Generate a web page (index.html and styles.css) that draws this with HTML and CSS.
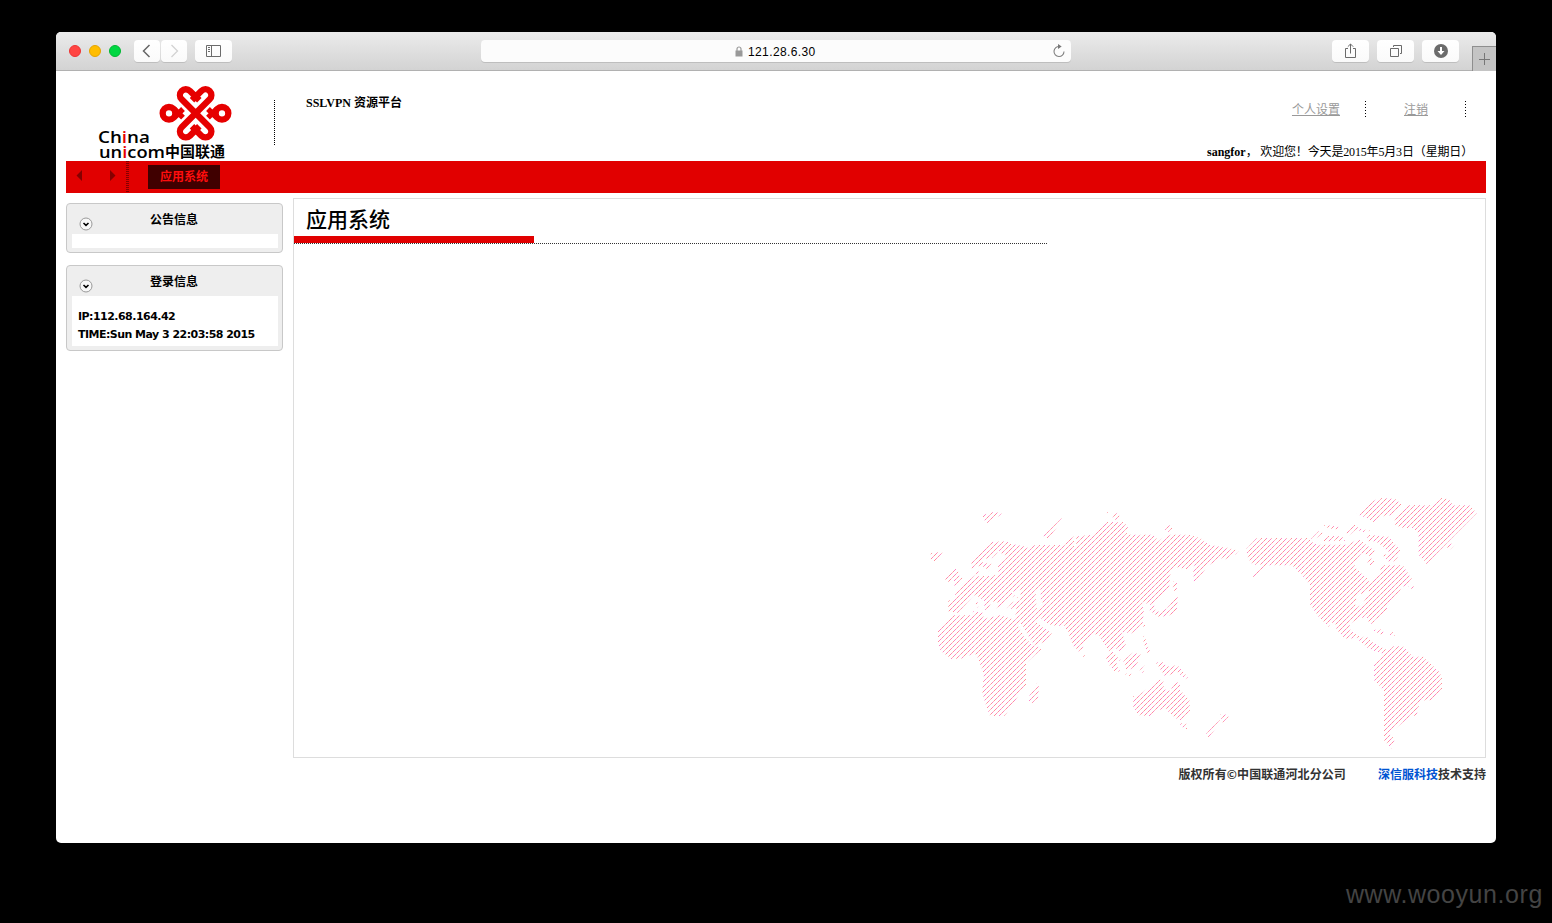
FILE: index.html
```html
<!DOCTYPE html>
<html lang="zh-CN">
<head>
<meta charset="utf-8">
<title>SSLVPN 资源平台</title>
<link rel="stylesheet" href="styles.css">
</head>
<body>
<div class="window">
  <div class="toolbar">
    <div class="lights"><i class="light red"></i><i class="light amber"></i><i class="light green"></i></div>
    <div class="history">
      <span class="btn small"><svg width="26" height="22" viewBox="0 0 26 22"><path d="M15.500 5 9.500 11l6 6" fill="none" stroke="#666" stroke-width="1.500"/></svg></span>
      <span class="btn small"><svg width="26" height="22" viewBox="0 0 26 22"><path d="M10.500 5 16.500 11l-6 6" fill="none" stroke="#d2d2d2" stroke-width="1.300"/></svg></span>
    </div>
    <span class="btn sidebar-btn"><svg width="37" height="22" viewBox="0 0 37 22"><path d="M11.500 5.500h14v11h-14zM16.500 5.500v11M13 7.500h2M13 9.500h2M13 11.500h2" fill="none" stroke="#6b6b6b"/></svg></span>
    <div class="address">
      <span class="host"><svg width="8" height="11" viewBox="0 0 8 11"><path d="M2 5V3a2 2 0 0 1 4 0v2" fill="none" stroke="#999" stroke-width="1.200"/><path d="M.5 4.500h7v6h-7z" fill="#999"/></svg>121.28.6.30</span>
      <svg class="reload" width="13" height="14" viewBox="0 0 13 14"><path d="M7.500 2.500A5 5 0 1 0 12 7.500" fill="none" stroke="#808080" stroke-width="1.100"/><path d="M6 0v5l3.700-2.500z" fill="#777"/></svg>
    </div>
    <div class="actions">
      <span class="btn"><svg width="37" height="22" viewBox="0 0 37 22"><path d="M16 8.500h-2.500v9h10v-9H21M18.500 13.500V4M15.800 6.700l2.700-2.700 2.700 2.700" fill="none" stroke="#6b6b6b"/></svg></span>
      <span class="btn"><svg width="37" height="22" viewBox="0 0 37 22"><path d="M13.500 8.500h8v8h-8zM16.500 7V5.500h8v8H23" fill="none" stroke="#6b6b6b"/></svg></span>
      <span class="btn"><svg width="37" height="22" viewBox="0 0 37 22"><circle cx="19" cy="11" r="7" fill="#6b6b6b"/><path d="M18 7h2v4h2.500L19 15l-3.500-4H18z" fill="#fff"/></svg></span>
    </div>
    <span class="new-tab"><svg width="23" height="24" viewBox="0 0 23 24"><path d="M11.500 6v12M6 12.500h11" stroke="#777" fill="none"/></svg></span>
  </div>

  <div class="page">
    <header class="header">
      <svg class="logo" width="208" height="90" viewBox="0 0 208 90">
        <g transform="translate(89 12) scale(.3333)" fill="none" stroke="#e60000" stroke-width="19">
          <path d="M122 91 80 49A17.500 17.500 0 0 1 105 24L133 52M122 91l42-42A17.500 17.500 0 0 0 139 24L111 52"/>
          <path d="M122 91 80 133A17.500 17.500 0 0 0 105 158L133 130M122 91l42 42A17.500 17.500 0 0 1 139 158L111 130"/>
          <circle cx="42" cy="91" r="19"/><circle cx="201" cy="91" r="19"/>
          <path d="M58 78 84 104M58 104 84 78M185 78 159 104M185 104 159 78" stroke-width="16"/>
        </g>
        <g class="logo-text">
          <text x="32" y="72" textLength="52" lengthAdjust="spacingAndGlyphs">Ch<tspan class="hot">i</tspan>na</text>
          <text x="33" y="87" textLength="66" lengthAdjust="spacingAndGlyphs">un<tspan class="hot">i</tspan>com</text>
          <text class="logo-cn" x="99" y="86" textLength="60" lengthAdjust="spacingAndGlyphs">中国联通</text>
        </g>
      </svg>
      <div class="title">SSLVPN 资源平台</div>
      <div class="user">
        <div class="links"><a>个人设置</a><a>注销</a></div>
        <div class="welcome"><b>sangfor</b>，&nbsp;欢迎您！今天是2015年5月3日（星期日）</div>
      </div>
    </header>
    <nav class="nav">
      <svg class="arrows" width="63" height="32" viewBox="0 0 63 32"><path d="M16 9v11l-5.500-5.500zM44 9v11l5.500-5.500z" fill="#850000"/><path d="M61.500 0v32" stroke="#850000" stroke-width="3" stroke-dasharray="1 1"/></svg>
      <span class="tab">应用系统</span>
    </nav>
    <div class="body">
      <aside class="side">
        <section class="box"><h2><svg width="14" height="14" viewBox="0 0 14 14"><circle cx="7" cy="7" r="6" fill="#f8f8f8" stroke="#999"/><path d="m4.500 6 2.500 2.300L9.500 6" fill="none" stroke="#000" stroke-width="1.600"/></svg>公告信息</h2><div class="box-body empty"></div></section>
        <section class="box"><h2><svg width="14" height="14" viewBox="0 0 14 14"><circle cx="7" cy="7" r="6" fill="#f8f8f8" stroke="#999"/><path d="m4.500 6 2.500 2.300L9.500 6" fill="none" stroke="#000" stroke-width="1.600"/></svg>登录信息</h2><div class="box-body"><p>IP:112.68.164.42</p><p>TIME:Sun May 3 22:03:58 2015</p></div></section>
      </aside>
      <div class="main">
        <main class="panel">
          <h1>应用系统</h1>
          <div class="rule"></div>
          <svg class="map" width="560" height="260" viewBox="0 0 1680 780">
            <defs>
              <pattern id="hatch" width="45" height="15" patternUnits="userSpaceOnUse" shape-rendering="crispEdges">
                <path fill="#ff84c4" d="M12 0h3v3h-3zM3 9h3v3H3zM24 3h3v3h-3zM15 12h3v3h-3zM36 6h3v3h-3z"/>
                <path fill="#ff8f98" d="M9 3h3v3H9zM0 12h3v3H0zM21 6h3v3h-3zM42 0h3v3h-3zM33 9h3v3h-3z"/>
                <path fill="#ffb4bc" d="M6 6h3v3H6zM27 0h3v3h-3zM18 9h3v3h-3zM39 3h3v3h-3zM30 12h3v3h-3z"/>
              </pattern>
            </defs>
            <g fill="url(#hatch)">
              <path d="M188 75 220 66 246 68 240 76 204 100 190 88zM370 138 392 116 426 84 428 90 384 146zM558 68 566 66 566 72zM576 80 592 68 600 80 588 90zM734 120 748 104 758 116 745 126zM32 190 54 186 68 188 44 214 32 208zM75 268 90 252 96 240 108 236 118 250 118 262 128 264 124 274 104 290 102 272 94 262 96 272 86 278z"/>
              <path d="M154 216 214 156 262 154 272 162 314 168 312 178 340 165 436 165 438 156 460 140 510 135 522 134 560 96 608 96 624 108 620 134 700 134 716 154 740 134 808 134 844 146 870 165 916 172 956 182 948 192 918 208 900 204 860 230 850 246 822 276 820 240 834 222 800 238 770 232 752 246 748 290 694 344 664 336 672 362 668 400 636 430 606 426 618 466 600 484 584 472 568 486 552 460 538 436 520 432 496 450 488 474 480 488 458 466 446 430 432 408 392 406 362 386 348 396 374 414 396 432 368 458 348 464 364 478 318 520 318 584 254 678 210 678 196 640 186 604 192 554 174 504 164 490 122 506 94 508 62 482 54 462 54 422 102 376 156 376 160 364 190 368 190 386 240 376 286 390 288 356 260 356 278 336 300 332 282 318 252 340 224 358 234 338 206 332 212 346 196 364 192 330 162 316 114 368 84 364 84 332 108 326 104 304 158 262 172 250 154 234z"/>
              <path d="M328 618 352 578 358 590 354 624 336 640 326 632zM760 274 772 280 770 300 758 304zM762 328 774 320 770 366 744 378 714 380 688 360 692 340 708 350 704 366 720 364 740 356zM556 500 576 484 602 510 588 516 600 544 586 546 568 526zM610 512 638 488 662 492 648 530 620 542zM670 400 678 410 668 410zM670 432 676 446 682 464 690 484 682 490 670 454zM658 540 676 526 670 550zM612 552 634 550 630 558zM708 518 728 514 740 530 772 526 804 562 796 568 772 546 736 560zM640 618 654 618 718 568 732 576 730 598 752 602 766 570 780 584 780 600 808 630 810 664 786 692 766 684 736 656 714 660 690 678 656 676 640 650zM778 700 798 698 802 718 790 714zM858 732 880 708 900 690 898 702 866 742zM900 674 914 672 926 680 908 698zM486 500 494 494 494 502z"/>
              <path d="M978 178 1010 144 1166 144 1172 154 1194 164 1286 164 1314 146 1364 182 1356 200 1326 188 1300 220 1310 238 1340 264 1354 280 1380 242 1384 226 1448 226 1476 268 1466 284 1446 290 1432 314 1400 350 1404 364 1380 380 1364 390 1360 404 1346 396 1340 380 1312 386 1290 402 1290 418 1302 430 1326 444 1346 430 1342 444 1370 464 1400 480 1392 492 1362 482 1340 472 1310 444 1276 446 1250 420 1248 404 1234 396 1226 410 1194 378 1170 342 1170 286 1152 262 1116 226 1040 226 1002 262 998 258 1032 224 998 224 984 204z"/>
              <path d="M1310 72 1334 54 1352 38 1376 24 1426 26 1446 44 1420 78 1398 74 1360 96 1340 84zM1422 104 1426 80 1466 45 1534 46 1564 24 1586 28 1602 46 1650 46 1670 70 1582 158 1520 222 1496 194 1496 130 1478 114 1448 114zM1576 170 1616 150 1592 178zM1342 134 1406 140 1440 180 1434 200 1424 214 1404 214 1388 196 1412 190 1368 154 1342 154zM1172 148 1196 124 1210 130 1186 146zM1210 104 1256 110 1250 118 1226 116zM1212 138 1266 138 1276 152 1212 154zM1278 128 1300 102 1322 116 1352 122 1330 126 1308 118 1288 136zM1340 214 1358 204 1364 218 1352 228zM1358 420 1384 418 1394 430 1384 434zM1408 434 1418 426 1426 438zM1464 290 1482 288 1478 298z"/>
              <path d="M1362 516 1422 468 1448 468 1480 500 1510 500 1560 548 1566 566 1566 596 1534 630 1500 632 1490 676 1468 680 1408 732 1424 748 1414 776 1392 750 1392 602 1362 570z"/>
            </g>
            <path fill="#fff" d="M156 238 190 222 188 208 216 204 232 188 234 178 246 192 264 200 234 224 236 252 216 258 178 258 168 250zM274 306 300 300 302 324 288 322zM348 304 356 290 364 302 360 326 368 332 366 354 350 356 348 332zM290 402 302 400 318 426 334 452 346 468 330 460 314 440zM348 394 358 380 374 394 394 410 378 416zM1310 314 1320 300 1324 316 1344 302 1354 310 1336 326 1328 342 1304 356zM462 140h6v32h-6z"/>
            <path fill="url(#hatch)" d="M188 228 200 218 216 222 206 244zM166 250 176 242 176 254zM246 216 258 212 254 226zM190 344 202 340 204 352zM166 340 176 336 174 354zM1308 300 1318 292 1318 302z"/>
          </svg>
        </main>
        <footer class="footer"><span class="copyright">版权所有©中国联通河北分公司</span><span><a>深信服科技</a>技术支持</span></footer>
      </div>
    </div>
  </div>
</div>
<div class="watermark">www.wooyun.org</div>
</body>
</html>
```

FILE: styles.css
```css
* { box-sizing: border-box; }
body { margin: 0; height: 923px; padding: 32px 56px 0; background: #000; overflow: hidden; color: #000; font: 12px/18px "Liberation Serif", "Noto Sans CJK SC", serif; }
svg { display: block; flex: none; }
.window { height: 811px; background: #fff; border-radius: 5px; overflow: hidden; }
.toolbar { height: 39px; display: flex; align-items: flex-start; padding: 8px 0 0 13px; background: linear-gradient(#ebebeb, #d3d3d3); border-bottom: 1px solid #b1b1b1; }
.lights { display: flex; gap: 8px; padding-top: 5px; }
.light { width: 12px; height: 12px; border-radius: 50%; }
.red { background: #ff4543; border: 1px solid #e33; }
.amber { background: #ffbd00; border: 1px solid #e5a400; }
.green { background: #00d742; border: 1px solid #00b732; }
.history { display: flex; gap: 1px; margin-left: 13px; }
.btn { width: 37px; height: 22px; border-radius: 4px; background: linear-gradient(#fff, #fafafa); box-shadow: 0 1px 0 #bebebe; }
.small { width: 26px; }
.sidebar-btn { margin-left: 8px; }
.address { width: 590px; height: 22px; margin-left: 249px; padding: 0 6px 0 254px; display: flex; justify-content: space-between; align-items: center; border-radius: 4px; background: #fcfcfc; box-shadow: 0 1px 0 #bebebe; font: 12px/22px "Liberation Sans", sans-serif; }
.host { display: flex; align-items: center; gap: 5px; letter-spacing: .38px; padding-top: 1px; }
.actions { display: flex; gap: 8px; margin-left: 261px; }
.new-tab { width: 24px; height: 25px; margin: 6px 0 0 13px; border: solid #8e8e8e; border-width: 1px 0 0 1px; background: #c4c4c4; }
.page { padding: 0 10px; }
.header { height: 90px; display: flex; }
.logo { overflow: visible; }
.logo-text { font: 600 17px "Open Sans", sans-serif; }
.hot { fill: #e60000; }
.logo-cn { font: 700 14.500px "Noto Sans CJK SC", sans-serif; }
.title { height: 45px; margin-top: 29px; padding: 0 0 0 32px; font-weight: 700; line-height: 6px; background: repeating-linear-gradient(#000 0 1px, transparent 1px 2px) left / 1px 100% no-repeat; }
.user { margin-left: auto; width: 320px; padding: 30px 20px 0 0; }
.links { display: flex; justify-content: flex-end; color: #999; line-height: 18px; }
.links a { height: 18px; background: repeating-linear-gradient(#000 0 1px, transparent 1px 3px) right / 1px 100% no-repeat; padding-right: 26px; text-decoration: underline; text-underline-offset: 1px; }
.links a + a { padding: 0 38px; }
.welcome { margin-top: 24px; width: 280px; margin-left: 41px; white-space: nowrap; letter-spacing: -.16px; }
.welcome b { letter-spacing: 0; }
.nav { height: 32px; display: flex; align-items: center; background: #e10000; }
.tab { width: 72px; height: 24px; margin-left: 19px; background: #400000; color: #ff0d0d; font: 700 12px/22px "Noto Sans CJK SC", sans-serif; text-align: center; }
.body { display: flex; gap: 10px; }
.side { width: 217px; padding-top: 10px; }
.box { margin-bottom: 12px; padding: 0 4px 4px 5px; background: #eee; border: 1px solid #c8c8c8; border-radius: 4px; }
.box h2 { display: flex; height: 30px; margin: 0; font-size: 12px; line-height: 32px; }
.box h2 svg { margin: 13px 57px 0 7px; }
.box-body { height: 50px; padding: 12px 6px 0; background: #fff; font: 700 11px/18px "DejaVu Sans", sans-serif; letter-spacing: -.53px; white-space: nowrap; }
.empty { height: 14px; padding: 0; }
.box-body p { margin: 0; }
.main { width: 1193px; }
.panel { height: 560px; margin-top: 5px; display: flex; flex-direction: column; border: 1px solid #ddd; }
.panel h1 { height: 37px; margin: 0; padding-left: 12px; font-size: 21px; line-height: 43px; font-weight: 500; }
.rule { width: 754px; height: 8px; background: linear-gradient(#e10000, #e10000) 0 0 / 240px 7px no-repeat, repeating-linear-gradient(90deg, #333 0 1px, transparent 1px 2px) 0 7px / 100% 1px no-repeat; }
.map { margin: auto 5px 7px auto; }
.footer { display: flex; justify-content: flex-end; gap: 32px; padding-top: 7px; color: #333; font: 700 12px/18px "Noto Sans CJK SC", sans-serif; }
.copyright { letter-spacing: .1px; }
.footer a { color: #0054d2; }
.watermark { margin: 35px -47px 0 0; text-align: right; color: #444; font: 25px/32px "Liberation Sans", sans-serif; letter-spacing: .58px; }
```
